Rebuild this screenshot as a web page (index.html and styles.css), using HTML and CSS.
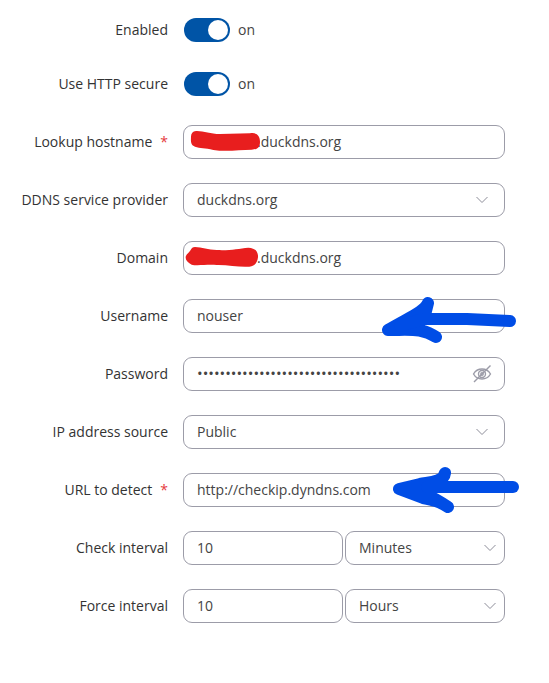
FILE: index.html
```
<!DOCTYPE html>
<html lang="en">
<head>
    <meta charset="UTF-8">
    <meta name="viewport" content="width=device-width, initial-scale=1.0">
    <title>DDNS Settings</title>
    <link rel="stylesheet" href="styles.css">
</head>
<body>

<form class="settings">
    <div class="group switches">
        <div class="row">
            <label class="name" for="enabled">Enabled</label>
            <div class="switch-field">
                <input class="switch" type="checkbox" id="enabled" name="enabled" checked>
                <span class="state">on</span>
            </div>
        </div>
        <div class="row">
            <label class="name" for="useHttps">Use HTTP secure</label>
            <div class="switch-field">
                <input class="switch" type="checkbox" id="useHttps" name="useHttps" checked>
                <span class="state">on</span>
            </div>
        </div>
    </div>

    <div class="group">
        <div class="row">
            <label class="name" for="lookup">Lookup hostname<span class="required">*</span></label>
            <div class="field">
                <input class="control masked" type="text" id="lookup" name="lookup" value=".duckdns.org">
                <svg class="scribble scribble-lookup" viewBox="60 60 213 66" aria-hidden="true">
                    <path d="M78 63C100 62 120 72 150 72L240 70C262 66 270 80 270 95C270 112 262 118 245 119C210 119 170 126 130 120C105 113 90 116 75 110C60 105 63 90 63 80C63 70 68 64 78 63Z"/>
                </svg>
            </div>
        </div>
        <div class="row">
            <label class="name" for="provider">DDNS service provider</label>
            <div class="field">
                <select class="control" id="provider" name="provider">
                    <option>duckdns.org</option>
                </select>
                <svg class="chevron" viewBox="0 0 12 8" aria-hidden="true"><path d="M0.5 1L6 6.500L11.500 1"/></svg>
            </div>
        </div>
        <div class="row">
            <label class="name" for="domain">Domain</label>
            <div class="field">
                <input class="control masked" type="text" id="domain" name="domain" value=".duckdns.org">
                <svg class="scribble scribble-domain" viewBox="45 408 222 66" aria-hidden="true">
                    <path d="M75 411C95 411 115 420 140 420C180 422 205 416 235 413C258 414 265 428 264 442C262 458 255 468 238 470C210 473 175 464 140 465C110 463 80 468 65 464C52 458 46 450 47 440C50 430 58 428 62 420C65 414 68 412 75 411Z"/>
                </svg>
            </div>
        </div>
        <div class="row">
            <label class="name" for="username">Username</label>
            <div class="field">
                <input class="control" type="text" id="username" name="username" value="nouser">
                <svg class="arrow arrow-username" viewBox="380 290 140 56" aria-hidden="true">
                    <path class="head" d="M428 303C424 312 410 317 388 330C412 330 422 328 436 337C426 330 416 329 404 328L424 319Z"/>
                    <path d="M510 321L467 319L423 319L400 326"/>
                </svg>
            </div>
        </div>
        <div class="row">
            <label class="name" for="password">Password</label>
            <div class="field">
                <input class="control password" type="password" id="password" name="password" value="abcdefghijklmnopqrstuvwxyz0123456789">
                <button class="reveal" type="button" aria-label="Show password">
                    <svg viewBox="0 0 20 20" aria-hidden="true">
                        <path d="M1.500 10C3.500 6.500 6.500 5 10 5S16.500 6.500 18.500 10C16.500 13.500 13.500 15 10 15S3.500 13.500 1.500 10Z"/>
                        <circle cx="10" cy="10" r="3.500"/>
                        <circle cx="10" cy="10" r="1.200"/>
                        <path d="M2 18L18.500 1.500"/>
                    </svg>
                </button>
            </div>
        </div>
        <div class="row">
            <label class="name" for="source">IP address source</label>
            <div class="field">
                <select class="control" id="source" name="source">
                    <option>Public</option>
                </select>
                <svg class="chevron" viewBox="0 0 12 8" aria-hidden="true"><path d="M0.5 1L6 6.500L11.500 1"/></svg>
            </div>
        </div>
        <div class="row">
            <label class="name" for="url">URL to detect<span class="required">*</span></label>
            <div class="field">
                <input class="control" type="text" id="url" name="url" value="http://checkip.dyndns.com">
                <svg class="arrow arrow-url" viewBox="390 465 140 56" aria-hidden="true">
                    <path class="head" d="M445 473C444 482 430 482 420 484L399 489L423 498C434 500 438 501 448 507C438 500 432 498 424 492L441 482Z"/>
                    <path d="M513 487L497 487L427 487"/>
                </svg>
            </div>
        </div>
        <div class="row">
            <label class="name" for="check">Check interval</label>
            <div class="pair">
                <div class="field">
                    <input class="control" type="text" id="check" name="check" value="10">
                </div>
                <div class="field">
                    <select class="control" name="checkUnit" aria-label="Check interval unit">
                        <option>Minutes</option>
                        <option>Hours</option>
                    </select>
                    <svg class="chevron" viewBox="0 0 12 8" aria-hidden="true"><path d="M0.5 1L6 6.500L11.500 1"/></svg>
                </div>
            </div>
        </div>
        <div class="row">
            <label class="name" for="force">Force interval</label>
            <div class="pair">
                <div class="field">
                    <input class="control" type="text" id="force" name="force" value="10">
                </div>
                <div class="field">
                    <select class="control" name="forceUnit" aria-label="Force interval unit">
                        <option>Hours</option>
                        <option>Minutes</option>
                    </select>
                    <svg class="chevron" viewBox="0 0 12 8" aria-hidden="true"><path d="M0.5 1L6 6.500L11.500 1"/></svg>
                </div>
            </div>
        </div>
    </div>
</form>

</body>
</html>
```
FILE: styles.css
```
body {
    margin: 0;
    background-color: #fff;
    color: #444;
    font-family: "Open Sans", sans-serif;
    font-size: 14px;
    line-height: 20px;
}

.settings {
    display: flex;
    flex-direction: column;
    gap: 29px;
    padding: 18px 44px 18px 0;
}

.group {
    display: flex;
    flex-direction: column;
    gap: 24px;
}

.switches {
    gap: 30px;
}

.row {
    display: grid;
    grid-template-columns: 168px 1fr;
    column-gap: 15px;
    align-items: center;
}

.name {
    text-align: right;
    color: #333;
}

.required {
    margin-left: 8px;
    color: #e5393c;
}

.switch-field {
    display: flex;
    align-items: center;
    gap: 8px;
    padding-left: 1px;
}

.switch {
    appearance: none;
    display: flex;
    justify-content: flex-end;
    box-sizing: border-box;
    width: 46px;
    height: 24px;
    margin: 0;
    padding: 2px;
    border-radius: 12px;
    background-color: #0054a6;
    cursor: pointer;
}

.switch::before {
    content: "";
    width: 20px;
    height: 20px;
    border-radius: 50%;
    background-color: #fff;
}

.switch:not(:checked) {
    justify-content: flex-start;
    background-color: #9c9ca8;
}

.field {
    position: relative;
}

.pair {
    display: grid;
    grid-template-columns: 1fr 1fr;
    gap: 2px;
}

.control {
    appearance: none;
    display: block;
    box-sizing: border-box;
    width: 100%;
    height: 34px;
    margin: 0;
    padding: 0 13px;
    border: 1px solid #9c9ca8;
    border-radius: 9px;
    background-color: #fff;
    color: #444;
    font: inherit;
}

input.control {
    padding-bottom: 2px;
}

.masked {
    padding-left: 73px;
}

.password {
    font-size: 15px;
}

.chevron {
    position: absolute;
    top: 13px;
    right: 17px;
    width: 12px;
    height: 8px;
    fill: none;
    stroke: #8c8c98;
    pointer-events: none;
}

.pair .chevron {
    right: 9px;
}

.reveal {
    position: absolute;
    top: 7px;
    right: 13px;
    width: 20px;
    height: 20px;
    padding: 0;
    border: none;
    background: none;
    cursor: pointer;
}

.reveal svg {
    display: block;
    fill: none;
    stroke: #9c9ca8;
    stroke-width: 1.4;
}

/* pen marks over the fields */
.scribble {
    position: absolute;
    top: 5px;
    height: 22px;
    fill: #e81e1e;
    pointer-events: none;
}

.scribble-lookup {
    left: 7px;
    width: 71px;
}

.scribble-domain {
    left: 2px;
    width: 74px;
}

.arrow {
    position: absolute;
    z-index: 1;
    width: 140px;
    height: 56px;
    fill: none;
    stroke: #004de6;
    stroke-width: 12;
    stroke-linecap: round;
    stroke-linejoin: round;
    pointer-events: none;
}

.arrow .head {
    fill: #004de6;
}

.arrow-username {
    top: -9px;
    right: -15px;
}

.arrow-url {
    top: -8px;
    right: -25px;
}
```
